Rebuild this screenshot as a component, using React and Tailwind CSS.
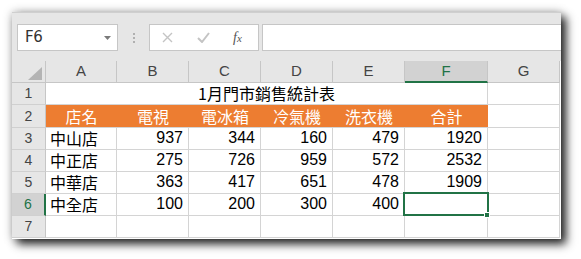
import React from "react";

const cjk = { fontFamily: '"Noto Sans CJK TC", "Noto Sans", sans-serif' };

const colLetters = ["A", "B", "C", "D", "E", "F", "G"];
const rows = [
  ["中山店", "937", "344", "160", "479", "1920"],
  ["中正店", "275", "726", "959", "572", "2532"],
  ["中華店", "363", "417", "651", "478", "1909"],
  ["中全店", "100", "200", "300", "400", ""],
];
const heads = ["店名", "電視", "電冰箱", "冷氣機", "洗衣機", "合計"];

function RowHead({ n, selected }) {
  return (
    <div
      className={
        "flex items-center justify-center border-b border-[#d0d0d0] text-[14px] font-['Liberation_Sans',sans-serif] " +
        (selected
          ? "bg-[#d2d2d2] text-[#217346] border-r-2 border-r-[#217346]"
          : "bg-[#e6e6e6] text-[#444] border-r border-r-[#c6c6c6]")
      }
    >
      {n}
    </div>
  );
}

export default function App() {
  return (
    <div className="w-[581px] h-[259px] bg-white pl-[12px] pt-[12px]">
      <div className="w-[549px] h-[227px] bg-[#e6e6e6] border-t border-[#cfcfcf] shadow-[5px_5px_9px_rgba(0,0,0,0.85),0_0_9px_rgba(0,0,0,0.25)] flex flex-col">
        {/* formula bar */}
        <div className="h-[48px] flex items-start pt-[11px] pl-[5px]">
          <div className="w-[101px] h-[27px] bg-white border border-[#c6c6c6] flex items-center justify-between pl-[7px] pr-[6px]">
            <span className="text-[15px] text-[#333] font-['DejaVu_Sans',sans-serif] tracking-tight leading-none">F6</span>
            <svg width="7" height="4" viewBox="0 0 7 4">
              <path d="M0 0 H7 L3.5 4 Z" fill="#7a7a7a" />
            </svg>
          </div>
          <div className="w-[31px] h-[27px] flex flex-col items-center justify-center gap-[2px]">
            <div className="w-[2px] h-[2px] bg-[#b0b0b0]" />
            <div className="w-[2px] h-[2px] bg-[#b0b0b0]" />
            <div className="w-[2px] h-[2px] bg-[#b0b0b0]" />
          </div>
          <div className="w-[110px] h-[27px] bg-white border border-[#c6c6c6] flex items-center pl-[12px]">
            <svg width="11" height="11" viewBox="0 0 11 11" className="mr-[24px]">
              <path d="M1 1 L10 10 M10 1 L1 10" stroke="#c4c4c4" strokeWidth="1.4" />
            </svg>
            <svg width="13" height="11" viewBox="0 0 13 11" className="mr-[23px]">
              <path d="M1 6 L5 10 L12 1" stroke="#c4c4c4" strokeWidth="2" fill="none" />
            </svg>
            <span className="text-[14px] italic text-[#555] font-['Liberation_Serif',serif] leading-none">
              f<span className="text-[11px]">x</span>
            </span>
          </div>
          <div className="flex-1 h-[27px] bg-white border-y border-l border-[#c6c6c6] ml-[3px]" />
        </div>

        {/* sheet */}
        <div className="grid grid-cols-[34px_71px_72px_72px_72px_72px_83px_72px] grid-rows-[22px_22px_23px_22px_22px_22px_22px_22px] bg-white flex-1">
          {/* corner */}
          <div className="bg-[#e6e6e6] border-r border-b border-[#c6c6c6] flex items-end justify-end pr-[3px] pb-[2px]">
            <svg width="14" height="13" viewBox="0 0 14 13">
              <path d="M14 0 V13 H0 Z" fill="#b4b4b4" />
            </svg>
          </div>
          {colLetters.map((l) => (
            <div
              key={l}
              className={
                "flex items-center justify-center text-[15px] font-['Liberation_Sans',sans-serif] border-r border-[#c6c6c6] " +
                (l === "F"
                  ? "bg-[#d2d2d2] text-[#217346] border-b-2 border-b-[#217346]"
                  : "bg-[#e6e6e6] text-[#444] border-b border-b-[#c6c6c6]")
              }
            >
              {l}
            </div>
          ))}

          {/* row 1 */}
          <RowHead n={1} />
          <div
            style={cjk}
            className="col-span-6 flex items-end justify-center pb-[1px] text-[16px] text-black border-r border-b border-[#d4d4d4] leading-[20px]"
          >
            1月門市銷售統計表
          </div>
          <div className="border-r border-b border-[#d4d4d4]" />

          {/* row 2 */}
          <RowHead n={2} />
          {heads.map((h) => (
            <div
              key={h}
              style={cjk}
              className="bg-[#ed7d31] text-white flex items-end justify-center pb-[1px] text-[16px] leading-[20px] border-b border-[#d4d4d4]"
            >
              {h}
            </div>
          ))}
          <div className="border-r border-b border-[#d4d4d4]" />

          {/* data rows */}
          {rows.map((r, i) => (
            <React.Fragment key={i}>
              <RowHead n={i + 3} selected={i === 3} />
              {r.map((v, j) => (
                <div
                  key={j}
                  style={j === 0 ? cjk : undefined}
                  className={
                    "relative border-r border-b border-[#d4d4d4] flex items-end text-[16px] text-black leading-[20px] pb-[1px] " +
                    (j === 0
                      ? "justify-start pl-[4px]"
                      : "justify-end pr-[5px] font-['Liberation_Sans',sans-serif]")
                  }
                >
                  {v}
                  {i === 3 && j === 5 && (
                    <>
                      <div className="absolute left-[-2px] top-[-2px] right-[-2px] bottom-[-1px] border-2 border-[#217346]" />
                      <div className="absolute right-[-3px] bottom-[-3px] w-[6px] h-[6px] bg-[#217346] border border-white" />
                    </>
                  )}
                </div>
              ))}
              <div className="border-r border-b border-[#d4d4d4]" />
            </React.Fragment>
          ))}

          {/* row 7 */}
          <RowHead n={7} />
          {colLetters.map((l) => (
            <div key={l} className="border-r border-b border-[#d4d4d4]" />
          ))}
        </div>
      </div>
    </div>
  );
}
